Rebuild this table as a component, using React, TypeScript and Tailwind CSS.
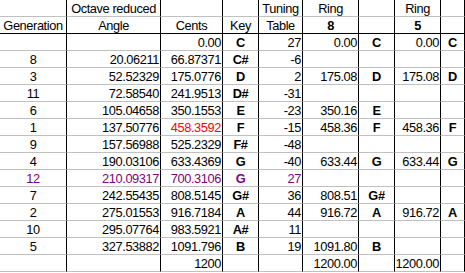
import React from "react";

type Cell = { t?: string; a?: "l" | "c" | "r"; b?: boolean; c?: string };

const widths = [
  "w-[67px]",
  "w-[94px]",
  "w-[62px]",
  "w-[36px]",
  "w-[44px]",
  "w-[56px]",
  "w-[36px]",
  "w-[46px]",
  "w-[24px]",
];

const P = "text-[#800080]";
const R = "text-[#ff0000]";

function row(
  gen: string,
  ang: string,
  cents: string,
  key: string,
  tun: string,
  r8 = "",
  k8 = "",
  r5 = "",
  k5 = "",
  color?: string,
  centsColor?: string
): Cell[] {
  return [
    { t: gen, a: "c", c: color },
    { t: ang, a: "r", c: color },
    { t: cents, a: "r", c: centsColor ?? color },
    { t: key, a: "c", b: true, c: color },
    { t: tun, a: "r", c: color },
    { t: r8, a: "r" },
    { t: k8, a: "c", b: true },
    { t: r5, a: "r" },
    { t: k5, a: "c", b: true },
  ];
}

const header1: Cell[] = [
  {},
  { t: "Octave reduced", a: "c" },
  {},
  {},
  { t: "Tuning", a: "c" },
  { t: "Ring", a: "c" },
  {},
  { t: "Ring", a: "c" },
  {},
];

const header2: Cell[] = [
  { t: "Generation", a: "c" },
  { t: "Angle", a: "c" },
  { t: "Cents", a: "c" },
  { t: "Key", a: "c" },
  { t: "Table", a: "c" },
  { t: "8", a: "c", b: true },
  {},
  { t: "5", a: "c", b: true },
  {},
];

const data: Cell[][] = [
  row("", "", "0.00", "C", "27", "0.00", "C", "0.00", "C"),
  row("8", "20.06211", "66.87371", "C#", "-6"),
  row("3", "52.52329", "175.0776", "D", "2", "175.08", "D", "175.08", "D"),
  row("11", "72.58540", "241.9513", "D#", "-31"),
  row("6", "105.04658", "350.1553", "E", "-23", "350.16", "E"),
  row("1", "137.50776", "458.3592", "F", "-15", "458.36", "F", "458.36", "F", undefined, R),
  row("9", "157.56988", "525.2329", "F#", "-48"),
  row("4", "190.03106", "633.4369", "G", "-40", "633.44", "G", "633.44", "G"),
  row("12", "210.09317", "700.3106", "G", "27", "", "", "", "", P),
  row("7", "242.55435", "808.5145", "G#", "36", "808.51", "G#"),
  row("2", "275.01553", "916.7184", "A", "44", "916.72", "A", "916.72", "A"),
  row("10", "295.07764", "983.5921", "A#", "11"),
  row("5", "327.53882", "1091.796", "B", "19", "1091.80", "B"),
  row("", "", "1200", "", "", "1200.00", "", "1200.00", ""),
];

function Row({ cells, black }: { cells: Cell[]; black?: boolean }) {
  return (
    <div className="flex">
      {cells.map((c, i) => (
        <div
          key={i}
          className={[
            widths[i],
            "h-[17px] shrink-0 flex items-start border-r border-b border-r-black whitespace-nowrap overflow-hidden leading-[16px] pt-px tracking-[-0.4px]",
            black ? "border-b-black" : "border-b-[#c0c0c0]",
            c.a === "r" ? "justify-end pr-[1px]" : c.a === "c" ? "justify-center" : "justify-start pl-[2px]",
            c.b ? "font-bold" : "",
            c.c ?? "text-black",
          ].join(" ")}
        >
          <span className="shrink-0">{c.t}</span>
        </div>
      ))}
    </div>
  );
}

export default function App() {
  return (
    <div
      className="w-[465px] h-[273px] bg-white overflow-hidden text-[12.8px]"
      style={{ fontFamily: '"Liberation Sans", Arial, sans-serif' }}
    >
      <Row cells={header1} />
      <Row cells={header2} black />
      {data.map((r, i) => (
        <Row key={i} cells={r} />
      ))}
    </div>
  );
}
